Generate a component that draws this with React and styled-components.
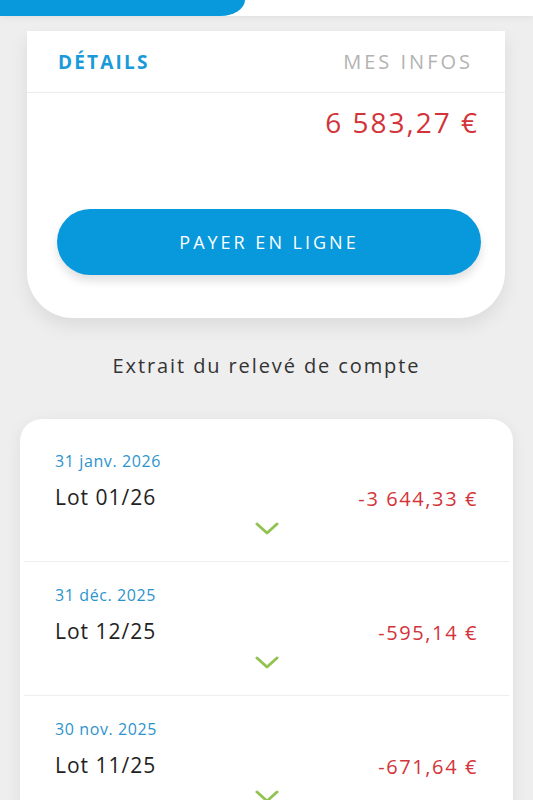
import React from 'react';
import styled, { createGlobalStyle } from 'styled-components';

const GlobalStyle = createGlobalStyle`
  html, body {
    margin: 0;
    padding: 0;
    background: #eeeeee;
    font-family: "Open Sans", "Liberation Sans", sans-serif;
  }
`;

const Page = styled.div`
  width: 533px;
  min-height: 800px;
  overflow: hidden;
  background: #eeeeee;
`;

const Header = styled.header`
  height: 16px;
  background: #ffffff;
  box-shadow: 0 2px 6px rgba(0, 0, 0, 0.06);
`;

const HeaderTab = styled.div`
  width: 245px;
  height: 16px;
  background: #0799dc;
  border-bottom-right-radius: 34px 22px;
`;

const SummaryCard = styled.section`
  margin: 15px 28px 0 27px;
  background: #ffffff;
  border-radius: 0 0 46px 46px;
  box-shadow: 0 8px 18px rgba(0, 0, 0, 0.08);
  padding-bottom: 43px;
`;

const Tabs = styled.nav`
  display: flex;
  justify-content: space-between;
  align-items: center;
  height: 61px;
  padding: 0 32px 0 31px;
  border-bottom: 1.5px solid #ececec;
`;

const Tab = styled.span`
  font-size: ${p => (p.$active ? '19px' : '20px')};
  letter-spacing: ${p => (p.$active ? '2.2px' : '3px')};
  font-weight: ${p => (p.$active ? 700 : 400)};
  color: ${p => (p.$active ? '#1a9ad8' : '#b3b3b3')};
`;

const Balance = styled.div`
  text-align: right;
  padding: 10px 26px 0 0;
  height: 116px;
  box-sizing: border-box;
  font-size: 28px;
  letter-spacing: 2px;
  color: #d3343a;
`;

const PayButton = styled.button`
  display: block;
  margin: 0 24px 0 30px;
  width: calc(100% - 54px);
  height: 66px;
  border: none;
  border-radius: 33px;
  background: #0799dc;
  color: #ffffff;
  font-family: inherit;
  font-size: 18px;
  letter-spacing: 3px;
  box-shadow: 0 6px 10px rgba(0, 0, 0, 0.12);
`;

const SectionTitle = styled.h2`
  margin: 0;
  padding: 34px 0 40px;
  text-align: center;
  font-size: 20px;
  font-weight: 400;
  letter-spacing: 1.9px;
  color: #333333;
`;

const StatementCard = styled.section`
  margin: 0 20px 0 20px;
  background: #ffffff;
  border-radius: 22px 22px 0 0;
  padding: 9px 4px 0;
  box-shadow: 0 4px 16px rgba(0, 0, 0, 0.07);
`;

const Entry = styled.div`
  display: flex;
  flex-direction: column;
  height: 134px;
  box-sizing: border-box;
  padding: 23px 31px 0 31px;
  border-bottom: 1.5px solid #eeeeee;
`;

const EntryDate = styled.div`
  font-size: 16px;
  letter-spacing: 0.6px;
  color: #2e93cc;
  line-height: 20px;
`;

const EntryRow = styled.div`
  display: flex;
  justify-content: space-between;
  align-items: center;
  margin-top: 10px;
  line-height: 28px;
`;

const Lot = styled.span`
  font-size: 21px;
  letter-spacing: 1px;
  color: #222222;
`;

const Amount = styled.span`
  font-size: 20px;
  letter-spacing: 1.6px;
  color: #d3343a;
  margin-top: 4px;
`;

const Toggle = styled.div`
  display: flex;
  justify-content: center;
  margin-top: 9px;
`;

const Chevron = () => (
  <svg width="24" height="14" viewBox="0 0 24 14">
    <path d="M2 2 L12 11 L22 2" fill="none" stroke="#92c352" strokeWidth="3" strokeLinecap="round" strokeLinejoin="round" />
  </svg>
);

const entries = [
  { date: '31 janv. 2026', lot: 'Lot 01/26', amount: '-3 644,33 €' },
  { date: '31 déc. 2025', lot: 'Lot 12/25', amount: '-595,14 €' },
  { date: '30 nov. 2025', lot: 'Lot 11/25', amount: '-671,64 €' },
];

const App = () => {
  return (
    <Page>
      <GlobalStyle />
      <Header>
        <HeaderTab />
      </Header>
      <SummaryCard>
        <Tabs>
          <Tab $active>DÉTAILS</Tab>
          <Tab>MES INFOS</Tab>
        </Tabs>
        <Balance>6 583,27 €</Balance>
        <PayButton>PAYER EN LIGNE</PayButton>
      </SummaryCard>
      <SectionTitle>Extrait du relevé de compte</SectionTitle>
      <StatementCard>
        {entries.map(e => (
          <Entry key={e.lot}>
            <EntryDate>{e.date}</EntryDate>
            <EntryRow>
              <Lot>{e.lot}</Lot>
              <Amount>{e.amount}</Amount>
            </EntryRow>
            <Toggle>
              <Chevron />
            </Toggle>
          </Entry>
        ))}
      </StatementCard>
    </Page>
  );
};

export default App;
